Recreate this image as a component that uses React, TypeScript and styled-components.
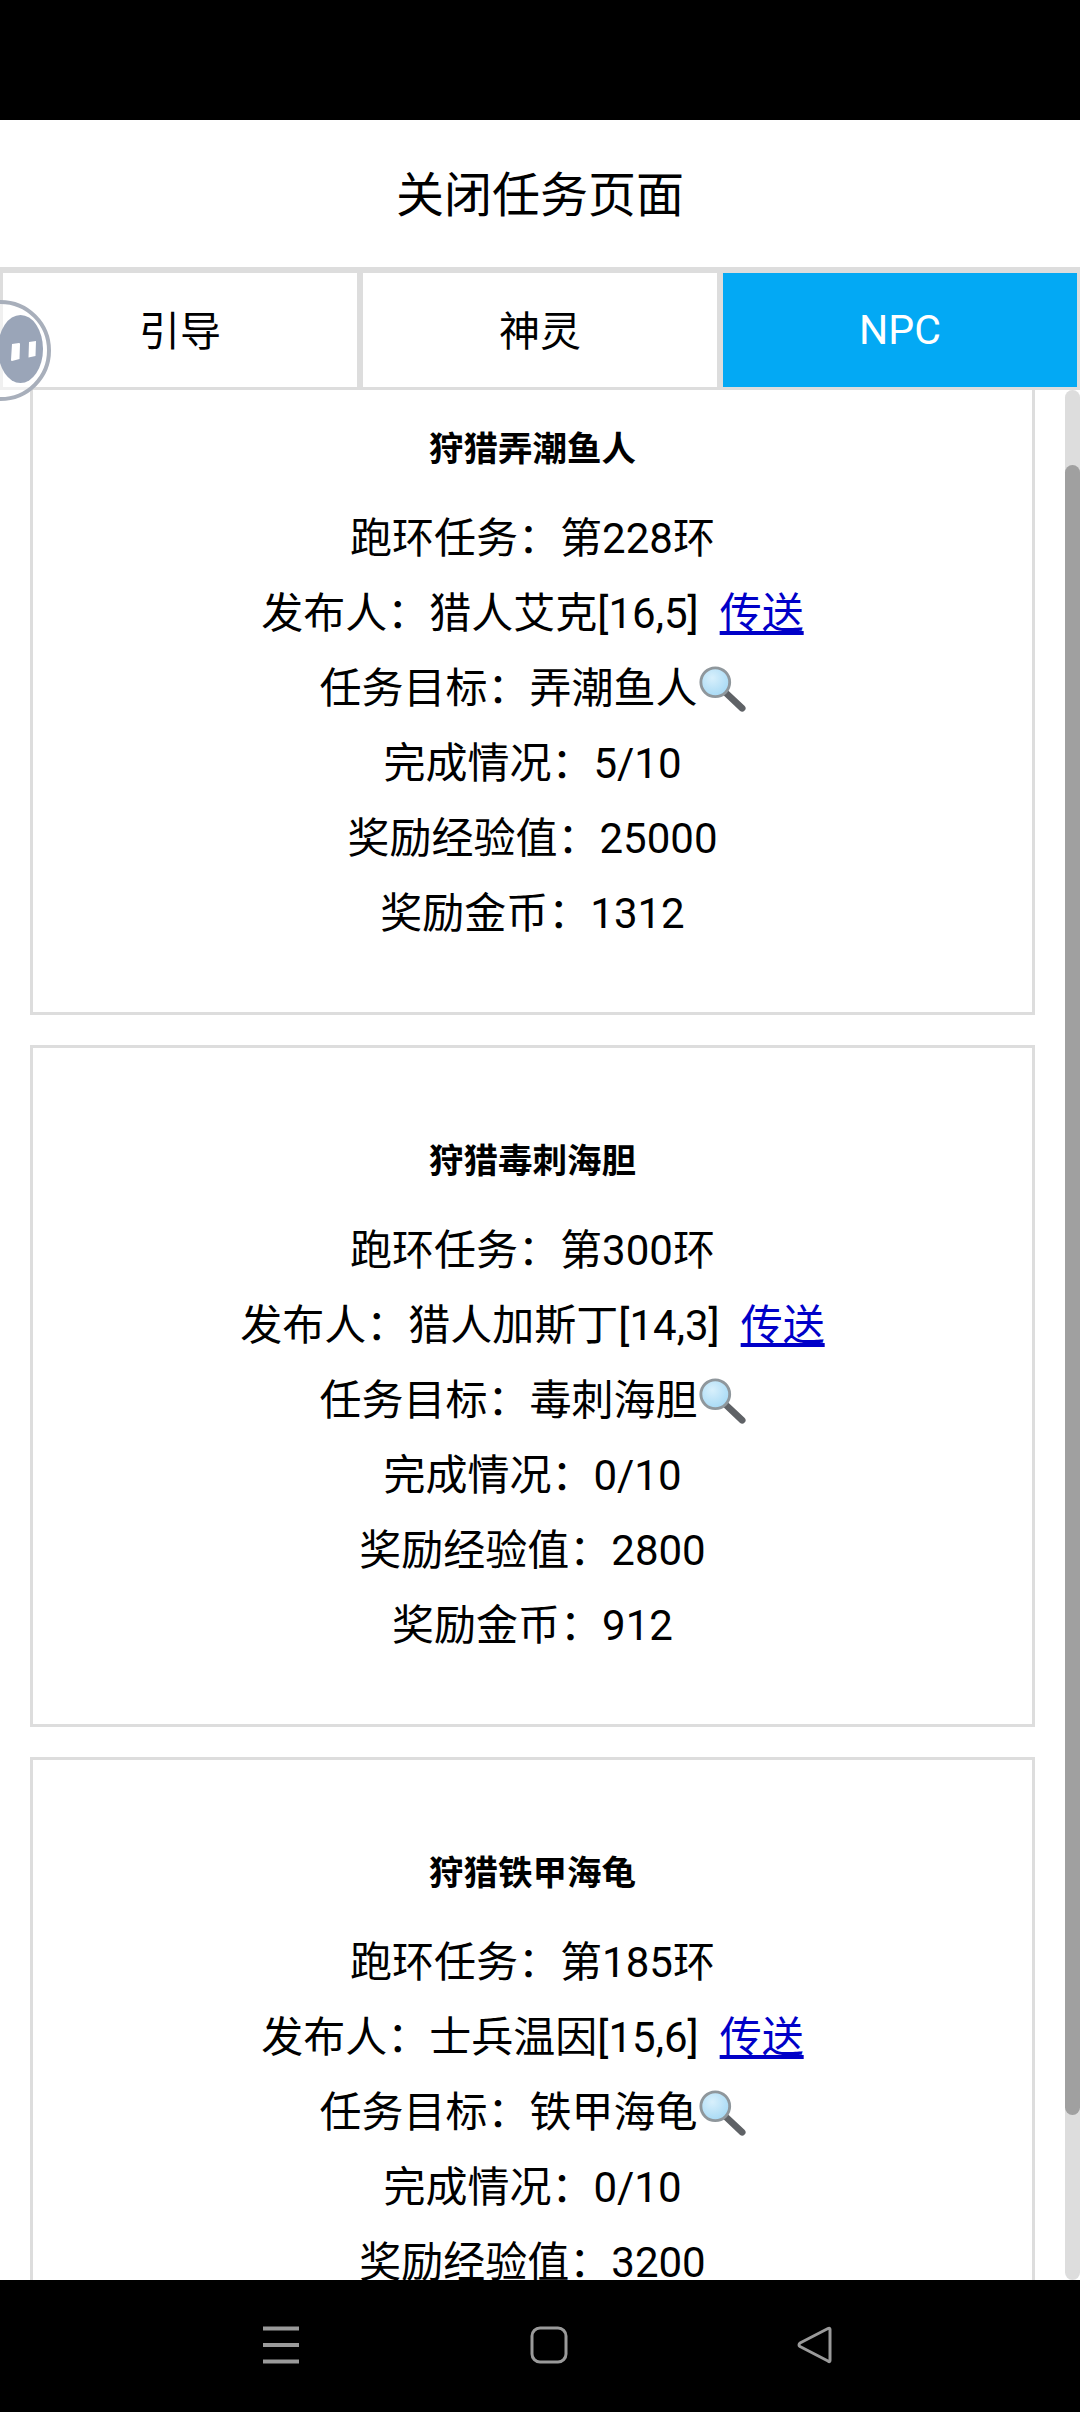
import React, { useLayoutEffect, useRef } from "react";
import styled, { createGlobalStyle } from "styled-components";

const Global = createGlobalStyle`
  html, body { margin: 0; padding: 0; background: #fff; }
  * { box-sizing: border-box; }
`;

const Screen = styled.div`
  position: relative;
  width: 1080px;
  height: 2412px;
  display: flex;
  flex-direction: column;
  overflow: hidden;
  background: #fff;
  color: #000;
  font-family: Roboto, "Liberation Sans", "Noto Sans CJK SC", sans-serif;
`;

const StatusBar = styled.div`
  height: 120px;
  flex: none;
  background: #000;
`;

const Header = styled.div`
  height: 147px;
  flex: none;
  display: flex;
  align-items: center;
  justify-content: center;
  font-size: 48px;
  padding-bottom: 6px;
`;

const Tabs = styled.div`
  flex: none;
  display: grid;
  grid-template-columns: repeat(3, 360px);
  border-top: 3px solid #ddd;
`;

const Tab = styled.div<{ $active?: boolean }>`
  height: 120px;
  display: flex;
  align-items: center;
  justify-content: center;
  border: 3px solid #ddd;
  font-size: 41px;
  padding-bottom: ${(p) => (p.$active ? "0" : "4px")};
  background: ${(p) => (p.$active ? "#03a9f4" : "#fff")};
  color: ${(p) => (p.$active ? "#fff" : "#000")};
`;

const Body = styled.div`
  flex: 1;
  min-height: 0;
  display: flex;
`;

const List = styled.div`
  flex: 1;
  min-width: 0;
  overflow: hidden;
  display: flex;
  flex-direction: column;
  gap: 30px;
  padding: 30px;
`;

const ScrollTrack = styled.div`
  flex: none;
  width: 15px;
  background: #ddd;
  border-radius: 8px;
  padding-top: 75px;
`;

const ScrollThumb = styled.div`
  height: 1650px;
  background: #a0a0a0;
  border-radius: 8px;
`;

const Card = styled.div`
  flex: none;
  height: 682px;
  border: 3px solid #ddd;
  padding-top: 76px;
  text-align: center;
`;

const CardTitle = styled.div`
  font-size: 34.5px;
  font-weight: 700;
  line-height: 75px;
  margin-bottom: 14px;
`;

const Line = styled.div`
  font-size: 42px;
  line-height: 75px;
  height: 75px;
  white-space: nowrap;
`;

const Teleport = styled.a`
  color: #0000c8;
  text-decoration: underline;
  margin-left: 21px;
`;

const Lens = styled.svg`
  width: 48px;
  height: 48px;
  vertical-align: -10px;
`;

const Floater = styled.div`
  position: absolute;
  left: -50px;
  top: 300px;
  width: 101px;
  height: 101px;
  border-radius: 50%;
  border: 4px solid #a8afbb;
  background: rgba(255, 255, 255, 0.55);
  display: flex;
  align-items: center;
  justify-content: flex-end;
  padding: 0 4px 3px 0;
`;

const FloaterCore = styled.div`
  width: 45px;
  height: 68px;
  border-radius: 50%;
  background: #9aa5b8;
  display: flex;
  align-items: center;
  padding: 4px 0 0 13px;
`;

const NavBar = styled.div`
  height: 132px;
  flex: none;
  background: #000;
  display: flex;
  align-items: flex-start;
  padding: 46px 0 0 263px;
`;

const MenuIcon = styled.svg`
  width: 36px;
  height: 38px;
`;

const HomeIcon = styled.svg`
  width: 38px;
  height: 38px;
  margin-left: 231px;
`;

const BackIcon = styled.svg`
  width: 38px;
  height: 38px;
  margin-left: 229px;
`;

type Quest = {
  title: string;
  loop: number;
  giver: string;
  target: string;
  done: string;
  xp: number;
  gold: number;
};

const quests: Quest[] = [
  { title: "狩猎弄潮鱼人", loop: 228, giver: "猎人艾克[16,5]", target: "弄潮鱼人", done: "5/10", xp: 25000, gold: 1312 },
  { title: "狩猎毒刺海胆", loop: 300, giver: "猎人加斯丁[14,3]", target: "毒刺海胆", done: "0/10", xp: 2800, gold: 912 },
  { title: "狩猎铁甲海龟", loop: 185, giver: "士兵温因[15,6]", target: "铁甲海龟", done: "0/10", xp: 3200, gold: 1000 },
];

function Magnifier() {
  return (
    <Lens viewBox="0 0 50 50">
      <defs>
        <radialGradient id="glass" cx="0.4" cy="0.35" r="0.7">
          <stop offset="0" stopColor="#d8f0fc" />
          <stop offset="1" stopColor="#a4d8f4" />
        </radialGradient>
      </defs>
      <line x1="29" y1="29" x2="46" y2="45" stroke="#5f6266" strokeWidth="7" strokeLinecap="round" />
      <circle cx="18" cy="18" r="15" fill="url(#glass)" stroke="#8f979c" strokeWidth="3" />
    </Lens>
  );
}

export default function App() {
  const listRef = useRef<HTMLDivElement>(null);
  useLayoutEffect(() => {
    if (listRef.current) listRef.current.scrollTop = 87;
  }, []);

  return (
    <Screen>
      <Global />
      <StatusBar />
      <Header>关闭任务页面</Header>
      <Tabs>
        <Tab>引导</Tab>
        <Tab>神灵</Tab>
        <Tab $active>NPC</Tab>
      </Tabs>
      <Body>
        <List ref={listRef}>
          {quests.map((q) => (
            <Card key={q.title}>
              <CardTitle>{q.title}</CardTitle>
              <Line>跑环任务：第{q.loop}环</Line>
              <Line>
                发布人：{q.giver}
                <Teleport>传送</Teleport>
              </Line>
              <Line>
                任务目标：{q.target}
                <Magnifier />
              </Line>
              <Line>完成情况：{q.done}</Line>
              <Line>奖励经验值：{q.xp}</Line>
              <Line>奖励金币：{q.gold}</Line>
            </Card>
          ))}
        </List>
        <ScrollTrack>
          <ScrollThumb />
        </ScrollTrack>
      </Body>
      <NavBar>
        <MenuIcon viewBox="0 0 36 38">
          <path d="M0 2.5h36M0 19h36M0 35.5h36" stroke="#9a9a9a" strokeWidth="4" fill="none" />
        </MenuIcon>
        <HomeIcon viewBox="0 0 38 38">
          <rect x="2" y="2" width="34" height="34" rx="8" stroke="#9a9a9a" strokeWidth="3" fill="none" />
        </HomeIcon>
        <BackIcon viewBox="0 0 38 38">
          <path d="M33 3.5 L33 34.5 Q33 36.5 31 35 L3 20.5 Q1 19 3 17 L31 2.5 Q33 1.5 33 3.5 Z" stroke="#9a9a9a" strokeWidth="3" fill="none" strokeLinejoin="round" />
        </BackIcon>
      </NavBar>
      <Floater>
        <FloaterCore>
          <svg width="25" height="20" viewBox="0 0 25 20">
            <path d="M1 3 L8 2 Q9 2 9 3 L8.5 18 L1 20 Q0 20 0 19 Z M18 1 L25 0 L24.5 15 L17.5 16.5 Z" fill="#fff" />
          </svg>
        </FloaterCore>
      </Floater>
    </Screen>
  );
}
